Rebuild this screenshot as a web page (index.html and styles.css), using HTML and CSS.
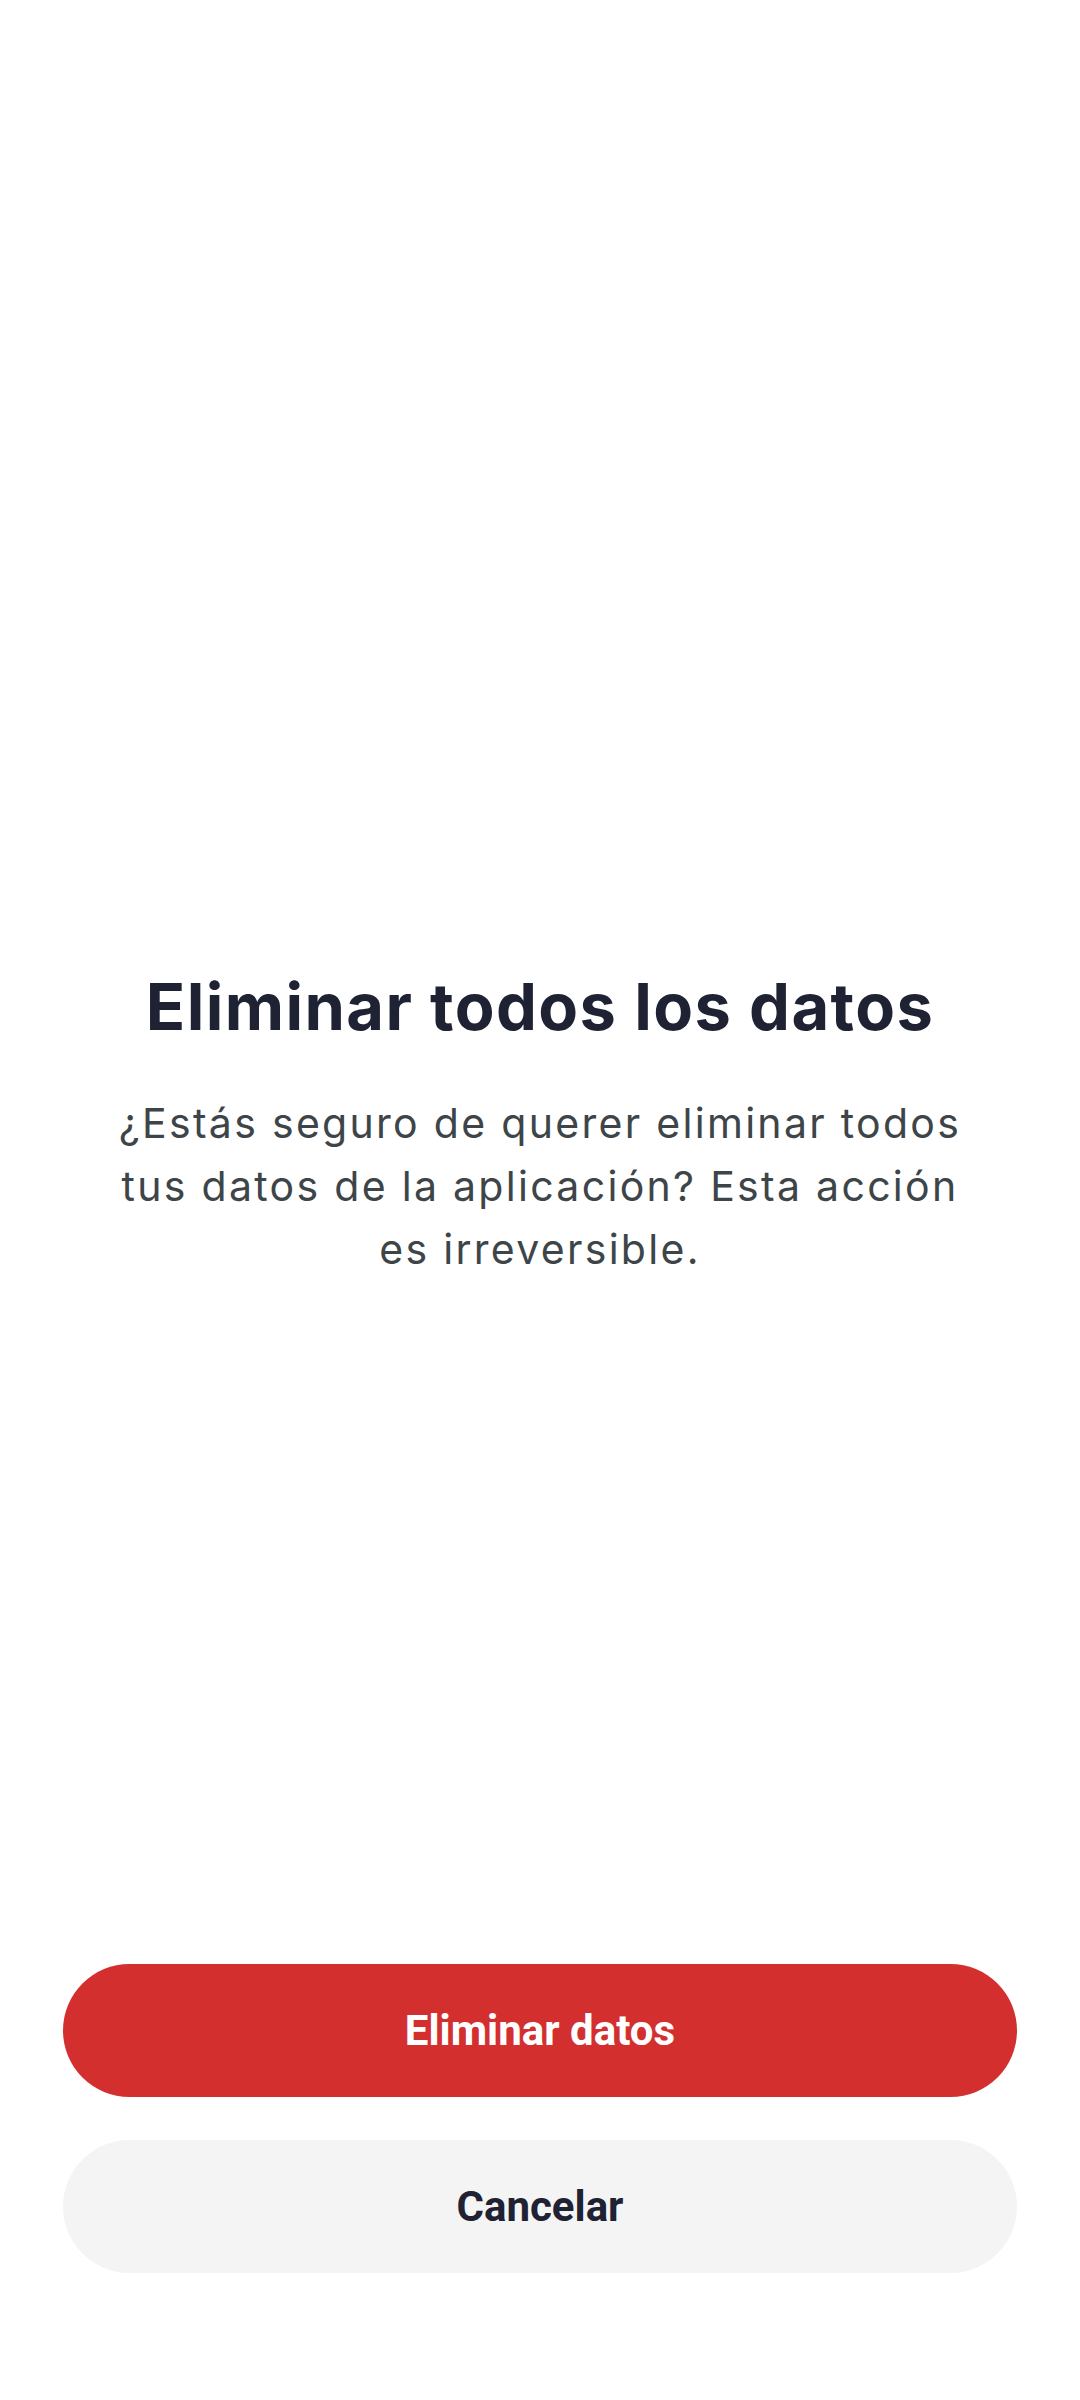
FILE: index.html
```html
<!DOCTYPE html>
<html lang="es">
<head>
<meta charset="utf-8">
<title>Eliminar todos los datos</title>
<link rel="stylesheet" href="styles.css">
</head>
<body>
<div class="screen">
  <main class="content">
    <h1 class="title">Eliminar todos los datos</h1>
    <p class="message">¿Estás seguro de querer eliminar todos tus datos de la aplicación? Esta acción es irreversible.</p>
  </main>
  <div class="actions">
    <button class="btn btn-danger">Eliminar datos</button>
    <button class="btn btn-secondary">Cancelar</button>
  </div>
</div>
</body>
</html>
```

FILE: styles.css
```css
html, body {
  margin: 0;
  padding: 0;
  background: #ffffff;
}

.screen {
  width: 1080px;
  height: 2400px;
  display: flex;
  flex-direction: column;
  box-sizing: border-box;
}

.content {
  flex: 1;
  display: flex;
  flex-direction: column;
  align-items: center;
  padding: 968px 100px 0;
  box-sizing: border-box;
}

.title {
  margin: 0;
  font-family: "Inter", "Noto Sans", sans-serif;
  font-weight: 700;
  font-size: 65px;
  line-height: 77px;
  color: #1e2233;
  text-align: center;
  letter-spacing: 1.4px;
}

.message {
  margin: 47px 0 0;
  font-family: "Inter", "Noto Sans", sans-serif;
  font-weight: 400;
  font-size: 41px;
  line-height: 63px;
  color: #3d4548;
  text-align: center;
  letter-spacing: 2.3px;
}

.actions {
  display: flex;
  flex-direction: column;
  gap: 43px;
  padding: 0 63px 127px;
}

.btn {
  height: 133px;
  border: none;
  border-radius: 67px;
  font-family: "Roboto", sans-serif;
  font-weight: 700;
  font-size: 42px;
  cursor: pointer;
}

.btn-danger {
  background: #d32f2f;
  color: #ffffff;
}

.btn-secondary {
  background: #f4f4f4;
  color: #1e2233;
}
```
